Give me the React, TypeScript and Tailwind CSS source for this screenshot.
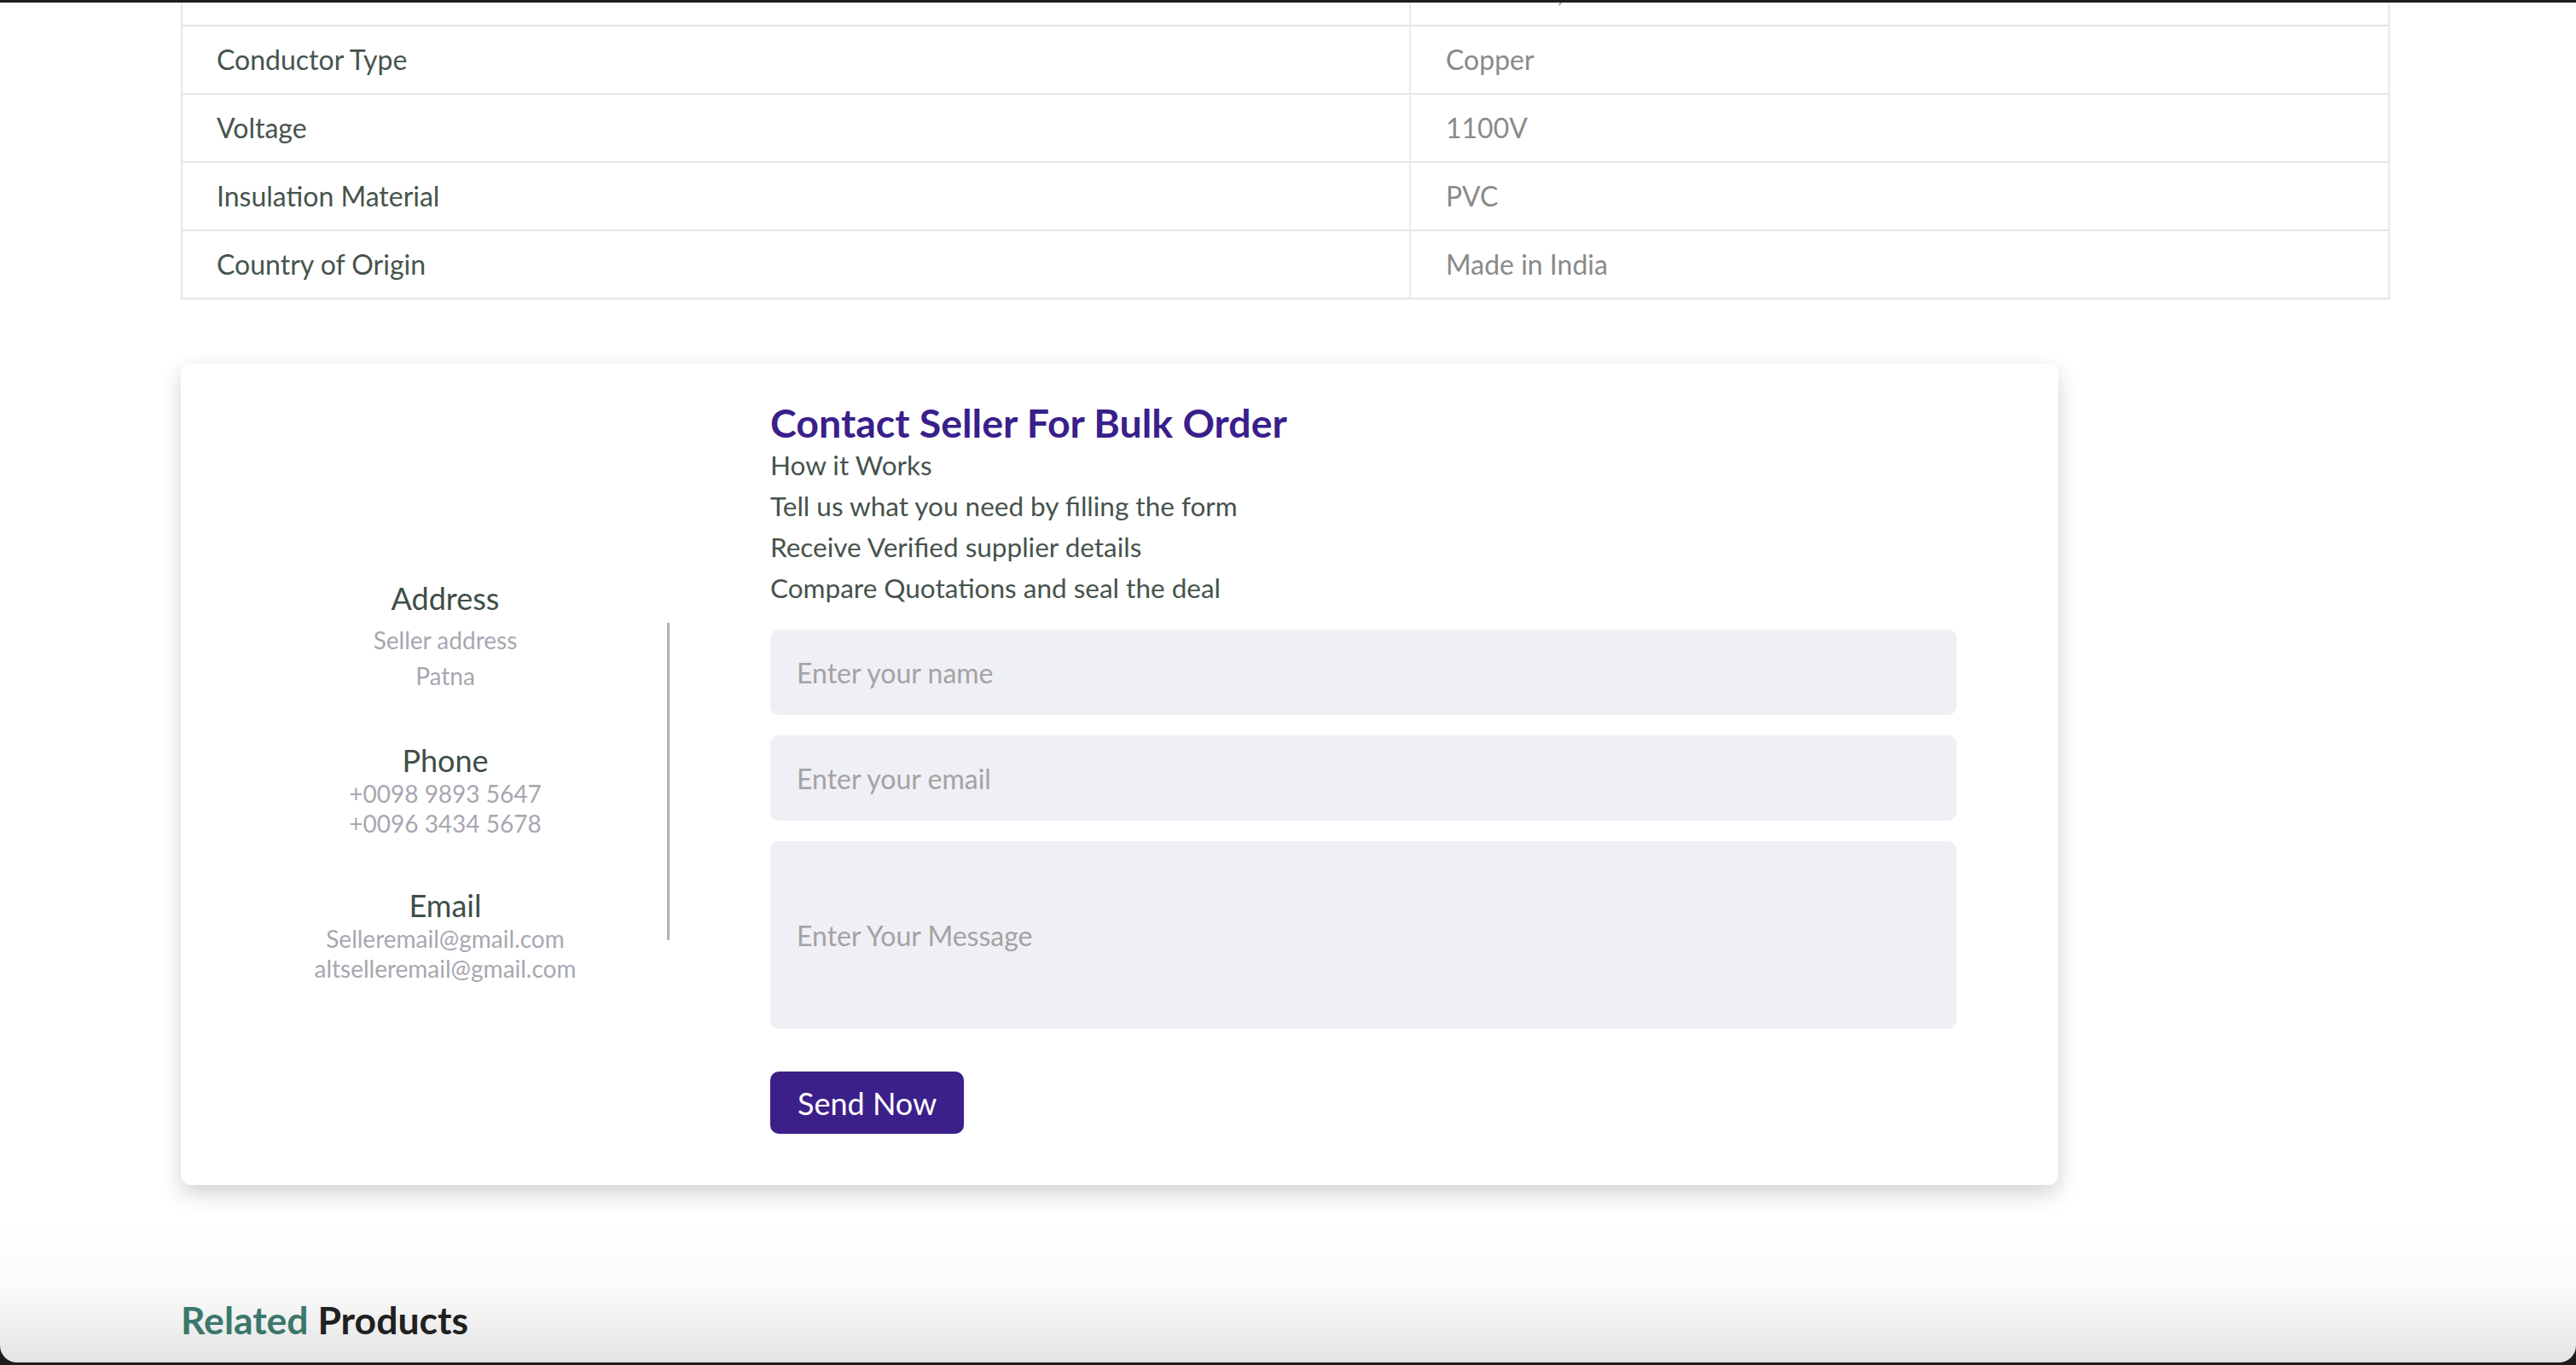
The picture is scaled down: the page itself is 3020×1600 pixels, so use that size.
import React from 'react';

const specs = [
  { label: 'Area of Use', value: 'Industrial, Domestic' },
  { label: 'Conductor Type', value: 'Copper' },
  { label: 'Voltage', value: '1100V' },
  { label: 'Insulation Material', value: 'PVC' },
  { label: 'Country of Origin', value: 'Made in India' },
];

function SpecTable() {
  return (
    <div className="-mt-[52px] ml-[212px] w-[2590px] border-x-2 border-[#e6e9e6]">
      {specs.map((row) => (
        <div key={row.label} className="flex h-[80px] border-b-2 border-[#e3e8e3]">
          <div className="w-[1440px] pl-[40px] flex items-center border-r-2 border-[#e8e9e8] text-[#46544c]">
            {row.label}
          </div>
          <div className="flex-1 pl-[41px] flex items-center text-[#8a8a8a]">{row.value}</div>
        </div>
      ))}
    </div>
  );
}

function SellerInfo() {
  return (
    <div className="w-[440px] mt-[34px] text-center">
      <h3 className="text-[36px] leading-[43px] text-[#3f4e47]">Address</h3>
      <p className="mt-[6px] text-[28px] leading-[42px] text-[#a7a7b0]">Seller address</p>
      <p className="text-[28px] leading-[42px] text-[#a7a7b0]">Patna</p>

      <h3 className="mt-[57px] text-[36px] leading-[43px] text-[#3f4e47]">Phone</h3>
      <p className="text-[28px] leading-[35px] text-[#a7a7b0]">+0098 9893 5647</p>
      <p className="text-[28px] leading-[35px] text-[#a7a7b0]">+0096 3434 5678</p>

      <h3 className="mt-[57px] text-[36px] leading-[43px] text-[#3f4e47]">Email</h3>
      <p className="text-[28px] leading-[35px] text-[#a7a7b0]">Selleremail@gmail.com</p>
      <p className="text-[28px] leading-[35px] text-[#a7a7b0]">altselleremail@gmail.com</p>
    </div>
  );
}

function ContactForm() {
  const field =
    'w-full rounded-[10px] bg-[#eff0f5] px-[31px] text-[32px] text-[#46544c] placeholder:text-[#a3a3a3] outline-none';
  return (
    <div className="ml-[118px] w-[1391px] flex flex-col items-start">
      <h2 className="text-[46.5px] leading-[52px] font-bold text-[#3a1f8c]">Contact Seller For Bulk Order</h2>
      <div className="text-[31.5px] leading-[48px] text-[#46534c]">
        <p>How it Works</p>
        <p>Tell us what you need by filling the form</p>
        <p>Receive Verified supplier details</p>
        <p>Compare Quotations and seal the deal</p>
      </div>
      <input className={`mt-[25px] h-[100px] ${field}`} placeholder="Enter your name" />
      <input className={`mt-[24px] h-[100px] ${field}`} placeholder="Enter your email" />
      <input className={`mt-[24px] h-[220px] ${field}`} placeholder="Enter Your Message" />
      <button className="mt-[50px] h-[73px] px-[32px] rounded-[10px] bg-[#3c2089] text-white text-[36px]">
        Send Now
      </button>
    </div>
  );
}

export default function App() {
  return (
    <div className="w-[3020px] h-[1600px] bg-[#1e1e1e] pt-[3px] font-[Lato,sans-serif]">
      <div className="relative h-[1594px] overflow-hidden rounded-b-[20px] bg-white text-[32px]">
        <SpecTable />

        {/* Contact card */}
        <div className="ml-[212px] mt-[75px] w-[2201px] rounded-[12px] bg-white shadow-[0_10px_26px_rgba(0,0,0,0.18)] flex items-center pl-[90px] pt-[43px] pb-[60px]">
          <SellerInfo />
          <div className="ml-[40px] mt-[34px] w-[3px] h-[372px] bg-[#b3b3ba]" />
          <ContactForm />
        </div>

        <h2 className="ml-[212px] mt-[131px] text-[44.5px] leading-[53px] font-bold text-[#222222]">
          <span className="text-[#3e7f73]">Related</span> Products
        </h2>

        {/* window bottom shade */}
        <div className="pointer-events-none absolute inset-x-0 bottom-0 h-[170px] bg-linear-to-b from-transparent via-black/[0.02] to-black/[0.11]" />
      </div>
    </div>
  );
}
